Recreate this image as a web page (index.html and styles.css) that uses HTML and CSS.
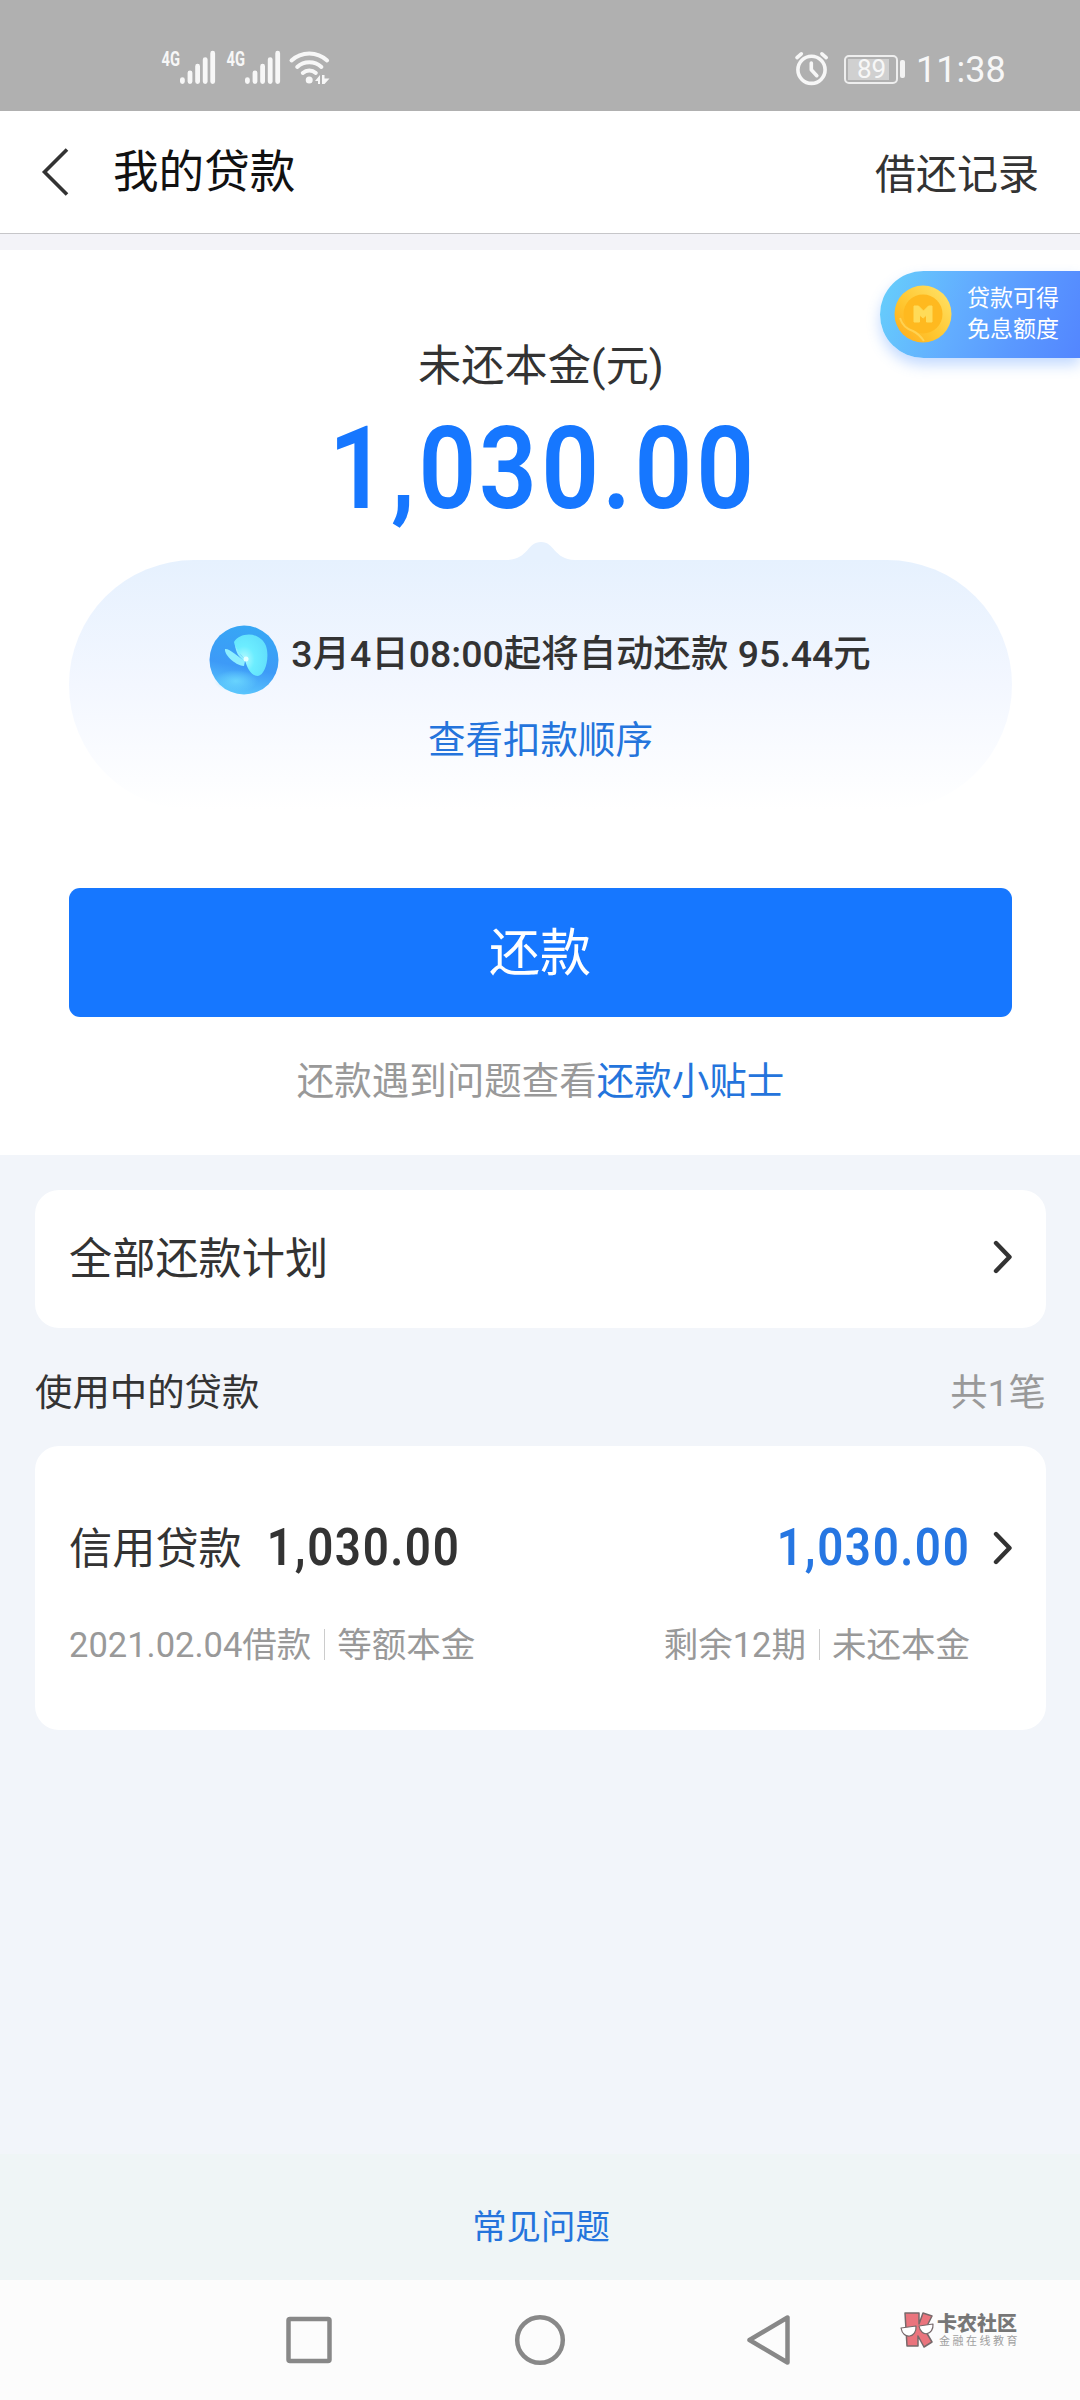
FILE: index.html
```html
<!DOCTYPE html>
<html lang="zh-CN">
<head>
<meta charset="utf-8">
<title>我的贷款</title>
<link rel="stylesheet" href="styles.css">
</head>
<body>
<div class="status">
  <svg class="signals" width="170" height="40" viewBox="160 48 170 40">
    <g id="sig" fill="none" stroke="#f7f7f7" stroke-width="4.8" stroke-linecap="round">
      <path d="M182.4 79.6v2M190 72.800v8.800M197.600 66.200v15.400M205.200 59.600v22M212.700 53.200v28.400"/>
    </g>
    <use href="#sig" x="65"/>
    <g class="net"><text x="161.500" y="65.700" textLength="18.500" lengthAdjust="spacingAndGlyphs">4G</text><text x="226.500" y="65.700" textLength="18.500" lengthAdjust="spacingAndGlyphs">4G</text></g>
    <g fill="none" stroke="#f7f7f7" stroke-width="4" stroke-linecap="round">
      <path d="M291.500 60.500a26 26 0 0 1 35.600 0M297.200 67a18 18 0 0 1 24.200 0M302.800 73a10 10 0 0 1 13 0"/>
    </g>
    <circle cx="309.200" cy="80" r="3.500" fill="#f7f7f7"/>
    <path d="M315 81l5-6v9h-2v-3zM322 75h2.500v3.500h5l-5 5.500h-2.500z" fill="#f7f7f7"/>
  </svg>
  <div class="status-right">
    <svg width="36" height="36" viewBox="795 51 36 36" fill="none" stroke="#f7f7f7" stroke-width="3.600" stroke-linecap="round" stroke-linejoin="round">
      <circle cx="812.500" cy="69.800" r="13.600"/><path d="M812.300 63v6.700l5.500 6"/><path d="M798 57.600l4.300-3.800M827.200 57.600l-4.300-3.800"/>
    </svg>
    <div class="battery"><span>89</span></div><i class="nub"></i>
    <span class="time">11:38</span>
  </div>
</div>

<header class="header">
  <svg width="28" height="48" viewBox="0 0 28 48" fill="none" stroke="#333" stroke-width="3.600"><path d="M26 1.500L3.500 24 26 46.500"/></svg>
  <h1>我的贷款</h1>
  <a class="records">借还记录</a>
</header>

<main class="page">
  <section class="hero">
    <aside class="promo">
      <svg width="60" height="60" viewBox="-30 -30 60 60">
        <defs><linearGradient id="coin" x1="1" y1="0" x2="0" y2="1"><stop offset="0" stop-color="#ffe56c"/><stop offset=".6" stop-color="#ffc52e"/><stop offset="1" stop-color="#ffa91c"/></linearGradient></defs>
        <circle r="28.500" fill="url(#coin)"/><circle r="19.500" fill="#ffb91f"/>
        <path d="M-23 4Q-20 14-10 17Q-4 20 1 27" fill="none" stroke="#ffdc62" stroke-width="2" opacity=".7"/>
        <path d="M-9-8h4.500l5 5 5-5H9V8H3.500V1L.2 4-3.500 1v7H-9z" fill="#ffdb58" stroke="#ffdb58" stroke-linejoin="round"/>
      </svg>
      <p>贷款可得<br>免息额度</p>
    </aside>
    <h2>未还本金(元)</h2>
    <svg class="big-amount" width="416" height="104" viewBox="0 0 416 104">
      <text class="din" transform="scale(.88 1)" y="84.500" x="24.600 76 126.600 195.400 266 319 372 442.200">1,030.00</text>
    </svg>
    <svg class="peak" width="68" height="18" viewBox="0 0 68 18"><path d="M0 18C22 17 20 0 34 0S46 17 68 18z" fill="#e6f1fe"/></svg>
    <div class="notice">
      <div class="notice-line">
        <svg width="70" height="70" viewBox="0 0 70 70">
          <defs>
            <linearGradient id="orb" x1=".6" y1="0" x2=".4" y2="1"><stop offset="0" stop-color="#36a7f5"/><stop offset=".6" stop-color="#3d9af7"/><stop offset="1" stop-color="#5cc8fd"/></linearGradient>
            <radialGradient id="wing" cx=".3" cy=".6" r=".8"><stop offset="0" stop-color="#b5fbff"/><stop offset=".4" stop-color="#6cedff"/><stop offset="1" stop-color="#5fdcfb"/></radialGradient>
            <radialGradient id="glow"><stop offset="0" stop-color="#6fdcff" stop-opacity=".8"/><stop offset="1" stop-color="#6fdcff" stop-opacity="0"/></radialGradient>
          </defs>
          <circle cx="35" cy="35" r="34.500" fill="url(#orb)"/>
          <ellipse cx="27" cy="56" rx="22" ry="11" fill="url(#glow)"/>
          <path d="M25 17C31 7 51 6 57 21C61 33 56 50 49 51C42 51 38 43 36 35C33 30 26 25 25 17z" fill="url(#wing)"/>
          <path d="M36 36C29 32 20 23 16 24C15 29 25 40 35 41zM36 34C31 30 27 22 26 20C27 27 29 32 36 36z" fill="#8deeff"/>
          <circle cx="37" cy="34" r="2.500" fill="#e5ffff"/>
        </svg>
        <p>3月4日08:00起将自动还款 95.44元</p>
      </div>
      <a class="order">查看扣款顺序</a>
    </div>
    <button class="repay">还款</button>
    <p class="tip">还款遇到问题查看<a>还款小贴士</a></p>
  </section>

  <section class="card plan">
    <span>全部还款计划</span>
    <svg class="chev" width="20" height="34" viewBox="0 0 20 34"><path d="M3 3L16.500 17 3 31"/></svg>
  </section>

  <div class="section-title"><span>使用中的贷款</span><span class="count">共1笔</span></div>

  <section class="card loan">
    <div class="row">
      <span class="name">信用贷款</span>
      <svg class="amount" width="188" height="48" viewBox="0 0 416 106"><text class="din dark" transform="scale(.88 1)" y="84.500" x="24.600 76 126.600 195.400 266 319 372 442.200">1,030.00</text></svg>
      <svg class="amount due" width="188" height="48" viewBox="0 0 416 106"><text class="din blue" transform="scale(.88 1)" y="84.500" x="24.600 76 126.600 195.400 266 319 372 442.200">1,030.00</text></svg>
      <svg class="chev" width="20" height="34" viewBox="0 0 20 34"><path d="M3 3L16.500 17 3 31"/></svg>
    </div>
    <div class="row meta">
      <span>2021.02.04借款</span><i></i><span>等额本金</span>
      <span class="left">剩余12期</span><i></i><span>未还本金</span>
    </div>
  </section>

  <footer class="faq"><a>常见问题</a></footer>
</main>

<nav class="nav">
  <svg class="keys" width="520" height="60" viewBox="280 2310 520 60" fill="none" stroke="#888" stroke-width="4.500" stroke-linejoin="round">
    <rect x="288.500" y="2319" width="41" height="42" rx="1.500"/>
    <circle cx="540" cy="2340" r="22.800"/>
    <path d="M787.500 2317.500v45L749.500 2340z"/>
  </svg>
  <div class="brand">
    <svg width="35" height="36" viewBox="0 0 35 36" stroke="#77696b" stroke-linejoin="round">
      <path d="M5 1h14v11l4-11 9 3-7 14 7 12-8 5-6-11v10H7z" fill="#ea747d" stroke-width="1.500"/>
      <path d="M1 16l15-2c1 12-13 14-15 2zM19 14l14-2c1 11-12 14-14 2z" fill="#fff" stroke-width="1.200"/>
    </svg>
    <div><b>卡农社区</b><small>金融在线教育</small></div>
  </div>
</nav>
</body>
</html>
```
FILE: styles.css
```css
* { box-sizing: border-box; margin: 0; padding: 0; }
body {
  width: 1080px; height: 2400px; overflow: hidden;
  display: flex; flex-direction: column;
  font-family: Roboto, "Noto Sans CJK SC", sans-serif;
  color: #333; background: #f2f5fa;
}
svg { display: block; flex: none; }
h1, h2 { font-weight: 400; }

.status {
  height: 111px; background: #b0b0b0; color: #f7f7f7;
  display: flex; justify-content: space-between; align-items: flex-start;
  padding: 48px 76px 0 160px;
}
.net { font: 700 21px Roboto, sans-serif; fill: #f7f7f7; }
.status-right { display: flex; align-items: center; height: 42px; }
.battery {
  width: 54px; height: 29px; margin-left: 14px;
  border: 2px solid #eee; border-radius: 5px;
  background: linear-gradient(#d0d0d0, #d0d0d0) 2px 2px / 41px 21px no-repeat;
  display: flex; justify-content: center; align-items: center;
  font-size: 26px; line-height: 25px;
}
.battery span { margin-left: 1px; }
.nub { width: 5px; height: 18px; margin-left: 2px; border-radius: 2px; background: #f3f3f3; }
.time { width: 88px; margin-left: 11px; padding-top: 1px; font-size: 36px; line-height: 40px; white-space: nowrap; }

.header {
  height: 123px; background: #fff; border-bottom: 1px solid #c6c6c9;
  display: flex; align-items: center; padding: 0 41px 0;
}
.header h1 { margin-left: 44px; padding-top: 2px; font-size: 45.6px; line-height: 60px; color: #111; }
.records { margin-left: auto; padding-top: 6px; font-size: 41px; line-height: 50px; }

.page { flex: 1; display: flex; flex-direction: column; }
.hero {
  position: relative; height: 921px; background: #fff; border-top: 16px solid #f3f3f8;
  display: flex; flex-direction: column; align-items: center; padding-top: 92px;
}
.promo {
  position: absolute; right: 0; top: 21px; width: 200px; height: 87px;
  border-radius: 44px 0 0 44px; padding: 0 0 1px 13px;
  background: linear-gradient(110deg, #67d0fb 0%, #62adff 40%, #5a99ff 68%, #5386ff 100%);
  box-shadow: 0 7px 14px #4c91ff55;
  display: flex; align-items: center; gap: 14px;
  color: #fff; font-size: 23px; line-height: 31px;
}
.hero h2 { margin-left: 2px; font-size: 43.2px; line-height: 50px; }
.big-amount { margin: 31px 0 0 8px; overflow: visible; }
.din { font-family: Roboto, sans-serif; font-weight: 600; font-size: 115px; text-anchor: middle; fill: #1677ff; }
.din.dark { fill: #333; }
.din.blue { fill: #2676e2; }
.peak { margin: 15px 0 0 2px; }
.notice {
  width: 943px; height: 250px; border-radius: 125px; padding-top: 65px;
  background: linear-gradient(#e6f1fe, #f3f7ff 50%, #fff);
  display: flex; flex-direction: column; align-items: center;
}
.notice-line { display: flex; gap: 12px; font-size: 37.45px; line-height: 59px; font-weight: 500; white-space: nowrap; }
.order, .tip a { color: #2474dc; }
.order { margin: 18px 0 0 1px; font-size: 37.5px; line-height: 54px; }
.repay {
  width: 943px; height: 129px; margin-top: 78px; border: 0; border-radius: 11px;
  background: #1677ff; color: #fff; font: 400 51px/128px Roboto, "Noto Sans CJK SC", sans-serif;
  padding-top: 2px;
}
.tip { margin: 37px 0 0 1px; font-size: 37.5px; line-height: 54px; color: #999; }

.card { margin: 0 34px 0 35px; background: #fff; border-radius: 24px; }
.plan {
  margin-top: 35px; height: 138px; padding: 0 33px 4px 34px;
  display: flex; align-items: center; justify-content: space-between; font-size: 43.2px;
}
.plan span { padding-bottom: 4px; }
.name { padding-bottom: 6px; }
.chev { fill: none; stroke: #333; stroke-width: 4.4; stroke-linecap: round; stroke-linejoin: round; }
.section-title {
  height: 118px; margin: 0 34px 0 35px; padding-top: 6px;
  display: flex; justify-content: space-between; align-items: center; font-size: 37.4px;
}
.count, .meta { color: #999; }
.loan { height: 284px; padding: 71px 33px 0 34px; }
.row { display: flex; align-items: center; height: 62px; white-space: nowrap; }
.name { font-size: 43.2px; }
.amount { margin: 5px 0 0 28px; overflow: visible; }
.due { margin: 5px 25px 0 auto; }
.meta { margin-top: 35px; padding-right: 43px; font-size: 34.5px; }
.meta span { padding-bottom: 7px; }
.meta i { width: 1px; height: 31px; margin: 0 12px 2px 13px; background: #ccc; }
.meta .left { margin-left: auto; }
.faq {
  margin-top: auto; height: 126px; padding: 20px 0 0 2px; background: #eff5f6;
  text-align: center; font-size: 34.4px; line-height: 106px; color: #2474dc;
}

.nav { height: 120px; background: #fcfcfc; display: flex; align-items: center; padding-left: 280px; }
.brand { margin: -20px 0 0 100px; display: flex; gap: 2px; align-items: center; }
.brand div { display: flex; flex-direction: column; padding-top: 2px; }
.brand b { font-size: 20px; line-height: 22px; font-weight: 900; color: #777; }
.brand small { margin-left: 2px; font-size: 11px; line-height: 14px; letter-spacing: 2.5px; color: #a0a0a0; }
```
